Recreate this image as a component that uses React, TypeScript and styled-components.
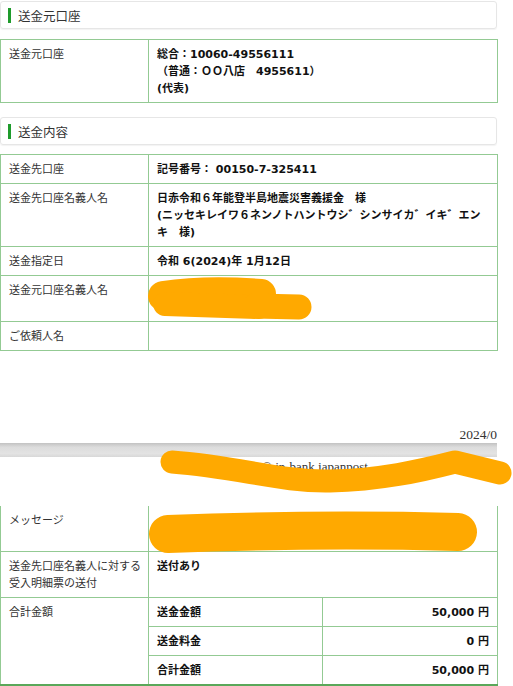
import React from "react";
import styled, { createGlobalStyle } from "styled-components";

const GlobalStyle = createGlobalStyle`
  html, body { margin: 0; padding: 0; background: #fff; }
  body {
    font-family: "DejaVu Sans", "Noto Sans CJK JP", sans-serif;
    color: #333;
    overflow: hidden;
  }
`;

const Page = styled.div`
  width: 497px;
  padding-top: 1px;
`;

const SectionHeader = styled.div<{ $mt: number }>`
  box-sizing: border-box;
  height: 28px;
  margin-top: ${(p) => p.$mt}px;
  border: 1px solid #e6e6e6;
  border-radius: 3px;
  box-shadow: 0 1px 1px rgba(0, 0, 0, 0.05);
  display: flex;
  align-items: center;
  gap: 7px;
  padding-left: 7px;
  font-family: "Noto Sans CJK JP", sans-serif;
  font-size: 12.5px;
  color: #333;
`;

const GreenBar = styled.span`
  width: 3px;
  height: 15px;
  background: #1f9b2c;
`;

const Table = styled.table<{ $mt: number; $noTop?: boolean }>`
  width: 497px;
  margin-top: ${(p) => p.$mt}px;
  border-collapse: collapse;
  table-layout: fixed;
  ${(p) => (p.$noTop ? "tr:first-child td { border-top: none; }" : "")}
`;

const Cell = styled.td`
  border: 1px solid #93ca93;
  padding: 6px 6px 5px 8px;
  line-height: 17px;
  font-size: 11px;
  vertical-align: top;
  word-break: break-all;
`;

const Label = styled(Cell)`
  color: #333;
  font-weight: normal;
`;

const Value = styled(Cell)<{ $last?: boolean }>`
  color: #111;
  font-weight: bold;
  ${(p) => (p.$last ? "border-bottom: 2px solid #5aa85a;" : "")}
`;

const Amount = styled(Value)`
  text-align: right;
  padding-right: 8px;
`;

const BottomLabel = styled(Label)`
  border-bottom: 2px solid #5aa85a;
`;

const Redacted = styled.div<{ $lines: number }>`
  position: relative;
  height: ${(p) => p.$lines * 17}px;
`;

const Scribble = styled.svg<{ $l: number; $t: number }>`
  position: absolute;
  left: ${(p) => p.$l}px;
  top: ${(p) => p.$t}px;
  overflow: visible;
  pointer-events: none;
`;

const Footer = styled.div`
  position: relative;
  margin-top: 76px;
`;

const DateLine = styled.div`
  font-family: "Liberation Serif", serif;
  font-size: 13.5px;
  line-height: 16px;
  color: #333;
  text-align: right;
`;

const Band = styled.div`
  height: 14px;
  background: linear-gradient(#c2c2c2, #dcdcdc 30%, #e3e3e3 75%, #d8d8d8);
`;

const Copyright = styled.div`
  font-family: "Liberation Serif", serif;
  font-size: 13px;
  line-height: 16px;
  color: #333;
  padding-left: 262px;
  padding-top: 2px;
`;

const ORANGE = "#FFA900";

const Cols = () => (
  <colgroup>
    <col style={{ width: 148 }} />
    <col style={{ width: 174 }} />
    <col style={{ width: 175 }} />
  </colgroup>
);

export default function App() {
  return (
    <>
      <GlobalStyle />
      <Page>
        <SectionHeader $mt={0}>
          <GreenBar />
          送金元口座
        </SectionHeader>
        <Table $mt={10}>
          <Cols />
          <tbody>
            <tr>
              <Label>送金元口座</Label>
              <Value colSpan={2}>
                総合：10060-49556111
                <br />
                （普通：ＯＯ八店　4955611）
                <br />
                (代表)
              </Value>
            </tr>
          </tbody>
        </Table>

        <SectionHeader $mt={14}>
          <GreenBar />
          送金内容
        </SectionHeader>
        <Table $mt={9}>
          <Cols />
          <tbody>
            <tr>
              <Label>送金先口座</Label>
              <Value colSpan={2}>記号番号： 00150-7-325411</Value>
            </tr>
            <tr>
              <Label>送金先口座名義人名</Label>
              <Value colSpan={2}>
                日赤令和６年能登半島地震災害義援金　様
                <br />
                (ニッセキレイワ６ネンノトハントウシ゛シンサイカ゛イキ゛エンキ　様)
              </Value>
            </tr>
            <tr>
              <Label>送金指定日</Label>
              <Value colSpan={2}>令和 6(2024)年 1月12日</Value>
            </tr>
            <tr>
              <Label>送金元口座名義人名</Label>
              <Value colSpan={2}>
                <Redacted $lines={2}>
                  <Scribble $l={-10} $t={-2} width="170" height="42">
                    <g stroke={ORANGE} strokeLinecap="round" fill="none">
                      <path d="M16 16 C50 11 90 12 114 14" strokeWidth="30" />
                      <path d="M18 24 L112 27" strokeWidth="24" />
                      <path d="M108 26 L152 27" strokeWidth="25" />
                    </g>
                  </Scribble>
                </Redacted>
              </Value>
            </tr>
            <tr>
              <Label>ご依頼人名</Label>
              <Value colSpan={2}></Value>
            </tr>
          </tbody>
        </Table>

        <Footer>
          <DateLine>2024/0</DateLine>
          <Band />
          <Copyright>© jp-bank japanpost</Copyright>
          <Scribble $l={0} $t={0} width="510" height="70">
            <path
              d="M172 35 C240 40 280 55 330 54 C380 53 420 44 455 35 L500 46"
              stroke={ORANGE}
              strokeWidth="23"
              strokeLinecap="round"
              strokeLinejoin="round"
              fill="none"
            />
          </Scribble>
        </Footer>

        <Table $mt={31} $noTop>
          <Cols />
          <tbody>
            <tr>
              <Label>メッセージ</Label>
              <Value colSpan={2}>
                <Redacted $lines={2}>
                  <Scribble $l={-10} $t={-1} width="340" height="46">
                    <path
                      d="M21 23 C100 20 200 18 311 21"
                      stroke={ORANGE}
                      strokeWidth="38"
                      strokeLinecap="round"
                      fill="none"
                    />
                  </Scribble>
                </Redacted>
              </Value>
            </tr>
            <tr>
              <Label>
                送金先口座名義人に対する
                <br />
                受入明細票の送付
              </Label>
              <Value colSpan={2}>送付あり</Value>
            </tr>
            <tr>
              <BottomLabel rowSpan={3}>合計金額</BottomLabel>
              <Value>送金金額</Value>
              <Amount>50,000 円</Amount>
            </tr>
            <tr>
              <Value>送金料金</Value>
              <Amount>0 円</Amount>
            </tr>
            <tr>
              <Value $last>合計金額</Value>
              <Amount $last>50,000 円</Amount>
            </tr>
          </tbody>
        </Table>
      </Page>
    </>
  );
}
